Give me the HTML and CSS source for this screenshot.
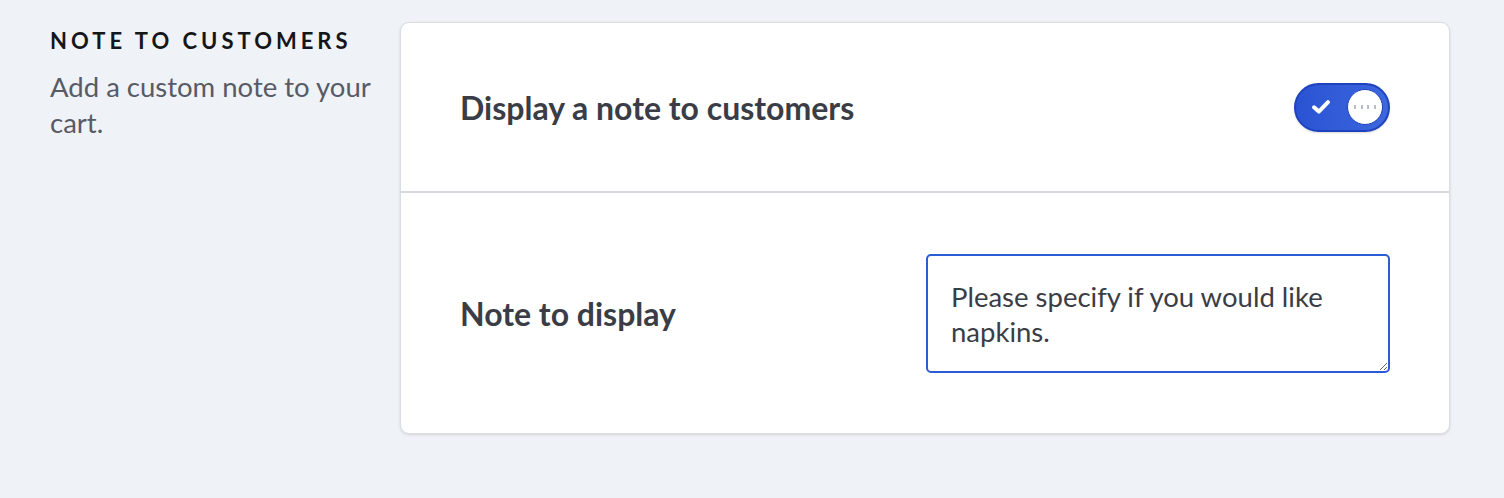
FILE: index.html
```html
<html>
<head>
<link rel="stylesheet" href="styles.css">
<title>Note to customers</title>
</head>
<body>
<div class="section">
  <div class="intro">
    <h2 class="intro-title">NOTE TO CUSTOMERS</h2>
    <p class="intro-text">Add a custom note to your cart.</p>
  </div>

  <div class="card">
    <div class="row row-toggle">
      <label class="row-label" for="showNote">Display a note to customers</label>
      <button id="showNote" class="toggle" type="button" aria-pressed="true">
        <svg class="toggle-check" width="20" height="16" viewBox="0 0 20 16">
          <path d="M3 8.3 L7.8 12.6 L17 3.2" fill="none" stroke="#fff" stroke-width="4" stroke-linecap="round" stroke-linejoin="round"/>
        </svg>
        <span class="toggle-knob">
          <svg width="24" height="6" viewBox="0 0 24 6">
            <rect x="1" y="1" width="2" height="4" fill="#b9bcc4"/>
            <rect x="8" y="1" width="2" height="4" fill="#b9bcc4"/>
            <rect x="14" y="1" width="2" height="4" fill="#b9bcc4"/>
            <rect x="21" y="1" width="2" height="4" fill="#b9bcc4"/>
          </svg>
        </span>
      </button>
    </div>
    <div class="row row-note">
      <label class="row-label" for="noteText">Note to display</label>
      <textarea id="noteText" class="note-input">Please specify if you would like napkins.</textarea>
    </div>
  </div>
</div>
</body>
</html>
```

FILE: styles.css
```css
body {
  margin: 0;
  background-color: #eff2f7;
  font-family: Lato, "Open Sans", sans-serif;
}

.section {
  display: flex;
  padding: 22px 54px 0 50px;
  gap: 20px;
}

.intro {
  width: 330px;
  flex-shrink: 0;
  padding-top: 6px;
}

.intro-title {
  margin: 0;
  font-size: 22px;
  line-height: 26px;
  font-weight: 700;
  letter-spacing: 4px;
  color: #15161a;
  white-space: nowrap;
}

.intro-text {
  margin: 15px 0 0 0;
  font-size: 27.5px;
  line-height: 36px;
  color: #575b66;
}

.card {
  flex: 1;
  background-color: #fff;
  border: 1px solid #d9dce2;
  border-radius: 9px;
  box-shadow: 0 1px 3px rgba(0, 0, 0, 0.12);
}

.row {
  display: flex;
  align-items: center;
  justify-content: space-between;
  padding: 0 59px;
}

.row-toggle {
  height: 168px;
  border-bottom: 2px solid #d5d8dd;
}

.row-note {
  padding-top: 61px;
  padding-bottom: 60px;
}

.row-label {
  font-size: 32px;
  font-weight: 700;
  color: #3a3d45;
}

.toggle {
  display: flex;
  align-items: center;
  justify-content: space-between;
  width: 96px;
  height: 49px;
  padding: 0 5px 0 15px;
  border: 2px solid #1f42bd;
  border-radius: 25px;
  background: linear-gradient(90deg, #2a53d3, #3c67de);
  box-shadow: 0 1px 2px rgba(0, 0, 0, 0.15);
  cursor: pointer;
}

.toggle-knob {
  display: flex;
  align-items: center;
  justify-content: center;
  width: 34px;
  height: 34px;
  border-radius: 50%;
  background-color: #fff;
  border: 1px solid #1f42bd;
}

.note-input {
  width: 464px;
  height: 119px;
  box-sizing: border-box;
  padding: 23px 23px 0 23px;
  border: 2px solid #2c5bd8;
  border-radius: 5px;
  font-family: Lato, "Open Sans", sans-serif;
  font-size: 27.5px;
  line-height: 35px;
  color: #3a3d45;
  outline: none;
}
```
